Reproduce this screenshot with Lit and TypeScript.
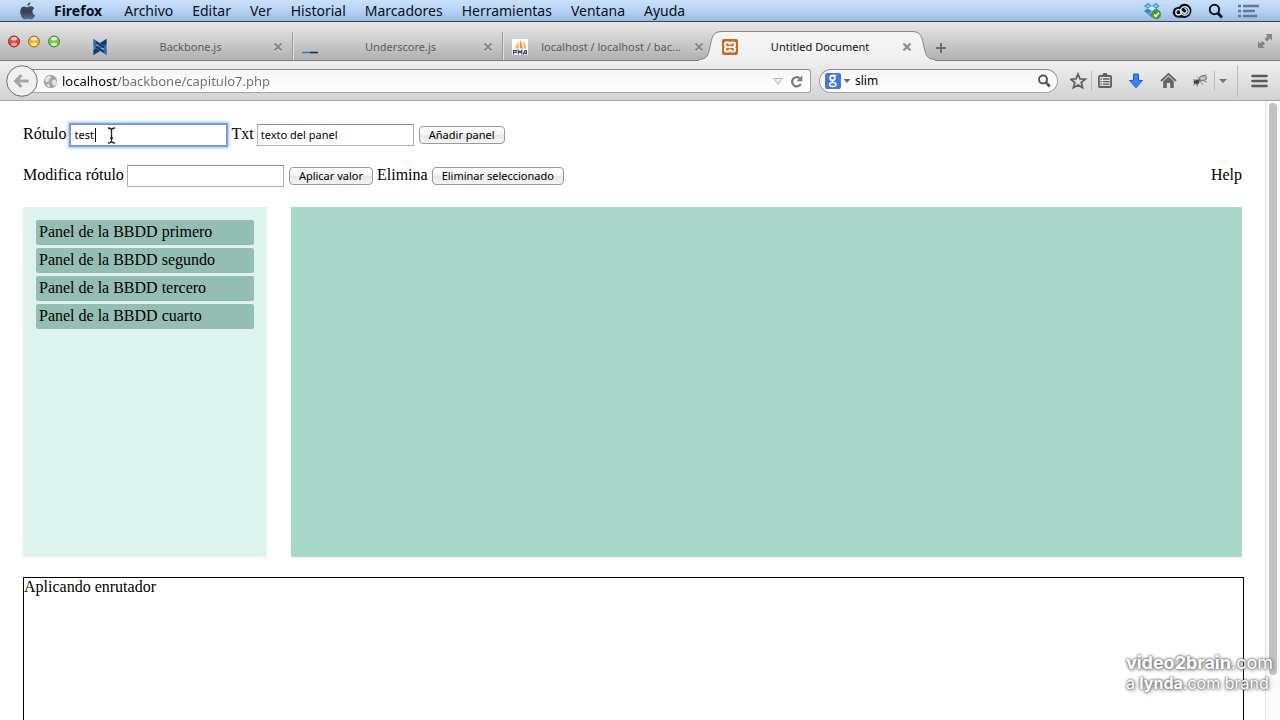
import { LitElement, html, css, svg } from "lit";
import { customElement } from "lit/decorators.js";

const closeIcon = html`<svg width="10" height="10" viewBox="0 0 10 10">
  <path d="M1.500 2.500 8.500 9.500M8.500 2.500 1.500 9.500" stroke="#fff" stroke-width="2" opacity=".5" />
  <path d="M1.500 1.500 8.500 8.500M8.500 1.500 1.500 8.500" stroke="#8a8a8a" stroke-width="2.200" />
</svg>`;

const backboneIcon = html`<svg width="16" height="18" viewBox="0 0 16 18">
  <path d="M1.500 1 4.500 3V14.500L1.500 17Z" fill="#3a78b9" />
  <path d="M14.500 1 11.500 3V14.500L14.500 17Z" fill="#2d65a3" />
  <path d="M14.500 1 7 5.500 9 9 14.500 6ZM1.500 17 9 12.500 7 9 1.500 12Z" fill="#1c3a61" />
  <path d="M1.500 1 8 5 14.500 10V17L8 13 1.500 8Z" fill="#2f6cae" />
  <path d="M4 4 12 9.500M4 8.500 12 14" stroke="#14253d" stroke-width="1.200" />
  <path d="M4.500 6.500 7 8 4.500 7.500ZM9 10 11.500 11.500 11.500 10.300Z" fill="#d8e2ec" />
</svg>`;

const underscoreIcon = html`<svg width="16" height="16" viewBox="0 0 16 16">
  <path d="M0 13.500H9" stroke="#3f7dbd" stroke-width="1.600" />
  <path d="M8 13.500H16" stroke="#17355a" stroke-width="1.600" />
</svg>`;

const pmaIcon = html`<svg width="16" height="16" viewBox="0 0 16 16">
  <rect width="16" height="16" fill="#fff" />
  <path d="M6.500 1.500V9.500H2.200Q5.500 6 6.500 1.500Z" fill="#f2b54a" />
  <path d="M8 1Q11 5 10.600 9.500H7.500Q8.500 5 8 1Z" fill="#e99a1c" />
  <path d="M11 2Q14 5 14 9.500H11.600Q12 6 11 2Z" fill="#f2b54a" />
  <path d="M1.500 15.500V11.500H4.200V13.500H1.500M6.300 15.500V11.500L8 13.500 9.800 11.500V15.500M11.300 15.500 13 11.500H14.300V15.500M12 14.200H14" fill="none" stroke="#3b3a77" stroke-width="1.200" />
</svg>`;

const xamppIcon = html`<svg width="16" height="16" viewBox="0 0 16 16">
  <rect width="16" height="16" rx="2" fill="#c96a22" />
  <path d="M4.500 3.500H6.500L8 5 9.500 3.500H11.500Q13 3.500 13 5V6.500L11.500 8 13 9.500V11Q13 12.500 11.500 12.500H9.500L8 11 6.500 12.500H4.500Q3 12.500 3 11V9.500L4.500 8 3 6.500V5Q3 3.500 4.500 3.500Z" fill="none" stroke="#fff" stroke-width="2" />
  <path d="M5.500 8H10.500" stroke="#fff" stroke-width="1.800" />
</svg>`;

interface TabInfo {
  title: string;
  icon: unknown;
}

const TABS: TabInfo[] = [
  { title: "Backbone.js", icon: backboneIcon },
  { title: "Underscore.js", icon: underscoreIcon },
  { title: "localhost / localhost / bac...", icon: pmaIcon },
];

@customElement("mac-menubar")
class MacMenubar extends LitElement {
  static styles = css`
    :host {
      display: block;
    }
    .bar {
      box-sizing: border-box;
      height: 22px;
      display: flex;
      align-items: center;
      padding: 0 20px 0 19px;
      background: linear-gradient(#c9e0fa, #b4d1f3 55%, #9cbade);
      border-bottom: 1px solid #35455c;
      font: 14px/20px "Noto Sans", sans-serif;
      color: #0a0f18;
    }
    .menus {
      flex: 1;
      display: flex;
      gap: 19px;
      margin-left: 18px;
    }
    .menu {
      border: 0;
      padding: 0;
      background: none;
      font: inherit;
      color: inherit;
    }
    .app {
      font-weight: 700;
      margin-right: 3px;
    }
    .status {
      display: flex;
      align-items: center;
      gap: 10px;
    }
    svg {
      display: block;
    }
  `;

  render() {
    const menus = ["Archivo", "Editar", "Ver", "Historial", "Marcadores", "Herramientas", "Ventana", "Ayuda"];
    return html`<nav class="bar">
      <svg width="17" height="20" viewBox="0 0 17 20">
        <defs>
          <linearGradient id="apple" x1="0" y1="0" x2="0" y2="1">
            <stop offset="0" stop-color="#4a5361" />
            <stop offset=".55" stop-color="#39414e" />
            <stop offset="1" stop-color="#5b7596" />
          </linearGradient>
        </defs>
        <path d="M11.500 1Q11.600 4.500 8.200 5 8.200 2 11.500 1ZM8.500 6.300Q10.200 5.200 12 5.300 14.200 5.500 15.300 7.200 13.200 8.500 13.400 10.800 13.600 13.300 16 14.200 14.500 18.500 12 18.600C10.700 18.600 10.200 17.900 8.700 17.900S6.700 18.700 5.500 18.600Q3.400 18.300 2 14.500C.5 10 1.500 5.600 5 5.400 6.500 5.300 7.300 6.300 8.500 6.300Z" fill="url(#apple)" />
      </svg>
      <div class="menus">
        <button class="menu app">Firefox</button>
        ${menus.map((m) => html`<button class="menu">${m}</button>`)}
      </div>
      <div class="status">
        <svg width="19" height="18" viewBox="0 0 19 18">
          <path d="M5 1 1 4 4.500 6.500 1 9 5 12 9 9 13 12 16.500 9 13.500 6.500 16.500 4 13 1 9 4Z" fill="#2f87c8" />
          <path d="M5 2.200 7.800 4.200 4.700 5.600 2.500 4ZM13 2.200 15.200 4 13.300 5.600 10.200 4.200Z" fill="#8cc3ea" />
          <path d="M9 4 13 6.500 9 9 4.500 6.500Z" fill="#d8ebfa" />
          <path d="M5 12.500 9 10 13 12.500 9 15.500Z" fill="#3a90cc" />
          <circle cx="13.300" cy="12.500" r="4.800" fill="#4f9d2c" />
          <path d="M11 12.500 12.800 14.300 15.800 10.800" fill="none" stroke="#fff" stroke-width="1.500" />
        </svg>
        <svg width="24" height="16" viewBox="0 0 24 16">
          <g fill="#0b0d11">
            <circle cx="6" cy="9.300" r="5.300" />
            <circle cx="12.500" cy="7.800" r="7" />
            <rect x="6" y="8" width="8" height="6.700" />
          </g>
          <g fill="none" stroke="#d8e8fa" stroke-width="1.400">
            <circle cx="6.500" cy="9.300" r="2.700" />
            <circle cx="12.800" cy="8" r="4.300" />
            <path d="M8.500 7.300 12 10.500Q15 10.500 15 8T12.500 5.800" />
          </g>
        </svg>
        <svg width="22" height="18" viewBox="0 0 22 18">
          <circle cx="8.500" cy="7.500" r="4.700" fill="none" stroke="#0c1118" stroke-width="2" />
          <path d="M11.800 11 16 15.500" stroke="#0c1118" stroke-width="2.600" />
        </svg>
        <svg width="22" height="14" viewBox="0 0 22 14">
          <path d="M0 2H3M5 2H21M0 7H3M5 7H17M0 12H3M5 12H19" stroke="#5f779b" stroke-width="2.600" />
        </svg>
      </div>
    </nav>`;
  }
}

@customElement("browser-tabs")
class BrowserTabs extends LitElement {
  static styles = css`
    :host {
      display: block;
    }
    .strip {
      box-sizing: border-box;
      height: 39px;
      display: flex;
      align-items: flex-end;
      background: linear-gradient(#e6e6e6, #d0d0d0 45%, #b0b0b0);
      border-bottom: 1px solid #7b7b7b;
      font: 11px/16px "Noto Sans", sans-serif;
      color: #5c5c5c;
    }
    .lights {
      align-self: flex-start;
      flex: none;
      width: 76px;
      padding: 13px 0 0 8px;
    }
    .tab {
      box-sizing: border-box;
      width: 210px;
      height: 28px;
      padding: 2px 10px 0 8px;
      display: flex;
      align-items: center;
      border-right: 1px solid #e2e2e2;
      box-shadow: inset -1px 0 #9b9b9b;
    }
    .tab.last {
      border-right: 0;
      box-shadow: none;
    }
    .title {
      flex: 1;
      text-align: center;
      white-space: nowrap;
    }
    .close,
    .new {
      flex: none;
      padding: 0;
      border: 0;
      background: none;
    }
    .close {
      width: 10px;
      height: 10px;
    }
    .active {
      display: flex;
      height: 30px;
      margin: 0 0 -1px -15px;
      z-index: 1;
      color: #111;
    }
    .body {
      box-sizing: border-box;
      width: 190px;
      height: 30px;
      display: flex;
      align-items: center;
      background: linear-gradient(#f6f6f6, #efefef);
      border-top: 1px solid #8b8b8b;
    }
    .new {
      width: 12px;
      height: 12px;
      margin: 0 0 6px;
    }
    .full {
      margin: 0 8px 12px auto;
    }
    svg {
      display: block;
    }
  `;

  private light(x: number, edge: string, fill: string, glow: string) {
    return svg`<circle cx=${x} cy="6.500" r="5.500" fill=${fill} stroke=${edge} />
      <ellipse cx=${x} cy="3.800" rx="3" ry="1.800" fill="#fff" opacity=".75" />
      <ellipse cx=${x} cy="9.300" rx="3" ry="1.800" fill=${glow} opacity=".8" />`;
  }

  private edge(flip: boolean) {
    return html`<svg width="23" height="30" viewBox="0 0 23 30">
      <defs>
        <linearGradient id="tabfill" x1="0" y1="0" x2="0" y2="1">
          <stop offset="0" stop-color="#f6f6f6" />
          <stop offset="1" stop-color="#efefef" />
        </linearGradient>
      </defs>
      <g transform=${flip ? "translate(23 0) scale(-1 1)" : ""}>
        <path d="M0 30V28.500C8 28 9 25 11 16 13 6 14 .5 23 .5V30Z" fill="url(#tabfill)" />
        <path d="M0 28.500C8 28 9 25 11 16 13 6 14 .5 23 .5" fill="none" stroke="#868686" />
      </g>
    </svg>`;
  }

  render() {
    return html`<div class="strip">
      <svg class="lights" height="13" viewBox="0 0 76 13">
        ${this.light(6, "#8e3530", "#de4a44", "#ffb0a8")} ${this.light(26, "#98702a", "#e6b03f", "#fff0a0")}
        ${this.light(46, "#4c8038", "#7cc35b", "#dcffb8")}
      </svg>
      ${TABS.map(
        (t, i) => html`<div class="tab ${i === TABS.length - 1 ? "last" : ""}">
          ${t.icon}<span class="title">${t.title}</span>
          <button class="close" aria-label="Cerrar">${closeIcon}</button>
        </div>`
      )}
      <div class="active">
        ${this.edge(false)}
        <div class="body">
          ${xamppIcon}<span class="title">Untitled Document</span>
          <button class="close" aria-label="Cerrar">${closeIcon}</button>
        </div>
        ${this.edge(true)}
      </div>
      <button class="new" aria-label="Nueva">
        <svg width="12" height="12" viewBox="0 0 12 12">
          <path d="M6 1V11M1 6H11" stroke="#6e6e6e" stroke-width="2" />
        </svg>
      </button>
      <svg class="full" width="14" height="14" viewBox="0 0 14 14">
        <path d="M7.500 0H14V6.500L12 4.500 9 7.500 6.500 5 9.500 2ZM0 7.500 2 9.500 4.500 7 7 9.500 4.500 12 6.500 14H0Z" fill="#858585" />
      </svg>
    </div>`;
  }
}

@customElement("browser-toolbar")
class BrowserToolbar extends LitElement {
  static styles = css`
    :host {
      display: block;
    }
    .bar {
      box-sizing: border-box;
      height: 40px;
      display: flex;
      align-items: center;
      padding: 1px 12px 0 6px;
      background: linear-gradient(#efefef, #d2d2d2);
      border-bottom: 1px solid #a8a8a8;
    }
    .icon {
      flex: none;
      padding: 0;
      border: 0;
      background: none;
    }
    .back {
      z-index: 1;
    }
    .field {
      box-sizing: border-box;
      height: 24px;
      display: flex;
      align-items: center;
      background: linear-gradient(#f6f6f6, #fff);
      border: 1px solid #a3a3a3;
      border-top-color: #8a8a8a;
    }
    .address {
      flex: 1;
      margin-left: -8px;
      padding: 0 7px 0 12px;
      border-radius: 0 3px 3px 0;
    }
    .search {
      width: 239px;
      margin: 0 12px 0 8px;
      padding: 0 5px;
      border-radius: 12px;
    }
    input {
      flex: 1;
      min-width: 0;
      border: 0;
      outline: 0;
      padding: 0;
      margin: 0 4px;
      background: none;
      font: 12px/18px "Noto Sans", sans-serif;
      color: #000;
    }
    .url {
      font-size: 13px;
      background: linear-gradient(90deg, #0b0b0b 55px, #6d6d6d 55px);
      -webkit-background-clip: text;
      background-clip: text;
      color: transparent;
    }
    .reload {
      margin-left: 7px;
    }
    .tools {
      display: flex;
      align-items: center;
    }
    .rule {
      width: 1px;
      height: 20px;
      background: #bdbdbd;
    }
    .tall {
      height: 32px;
      margin: 0 13px 0 8px;
    }
    svg {
      display: block;
    }
  `;

  render() {
    return html`<div class="bar">
      <button class="icon back" aria-label="Atrás">
        <svg width="32" height="32" viewBox="0 0 32 32">
          <circle cx="16" cy="16" r="15.300" fill="#f0f0f0" stroke="#6f6f6f" />
          <path d="M15.500 10 9.800 16 15.500 22M10 16H22.500" fill="none" stroke="#a3a3a3" stroke-width="3.200" />
        </svg>
      </button>
      <div class="field address">
        <svg width="15" height="15" viewBox="0 0 15 15">
          <circle cx="7.500" cy="7.500" r="6.800" fill="#a6a6a6" />
          <path d="M1.500 5Q4 2 7 1.500L8 4 5.500 5.500 6 7.500 3 8ZM8.500 7 12 5.500 14 8Q13 11 11 12L9.500 10ZM3.500 10.500 6 10 7 13.500Q5 13 3.500 10.500Z" fill="#e9e9e9" />
        </svg>
        <input class="url" aria-label="Dirección" .value=${"localhost/backbone/capitulo7.php"} />
        <svg width="10" height="7" viewBox="0 0 10 7">
          <path d="M.8.500H9.200L5 6.300Z" fill="#eee" stroke="#b3b3b3" />
        </svg>
        <button class="icon reload" aria-label="Recargar">
          <svg width="13" height="13" viewBox="0 0 13 13">
            <path d="M9.600 3.200A4.600 4.600 0 1 0 10.800 9" fill="none" stroke="#7b7b7b" stroke-width="2.200" />
            <path d="M12.300.5V6.300H6.500Z" fill="#7b7b7b" />
          </svg>
        </button>
      </div>
      <div class="field search">
        <svg width="26" height="16" viewBox="0 0 26 16">
          <rect width="16" height="16" rx="2" fill="#4a76dc" />
          <g fill="none" stroke="#fff">
            <circle cx="7.500" cy="5" r="2.400" stroke-width="1.600" />
            <path d="M8 2.300H11.300M9 7.200C6.500 8 6.500 8.800 8.500 9.300" stroke-width="1.300" />
            <ellipse cx="7.800" cy="11.600" rx="3.200" ry="2" stroke-width="1.500" />
          </g>
          <path d="M18.500 6H25.500L22 10Z" fill="#6a6a6a" />
        </svg>
        <input aria-label="Buscar" .value=${"slim"} />
        <svg width="15" height="14" viewBox="0 0 15 14">
          <circle cx="6" cy="5.500" r="4" fill="none" stroke="#555" stroke-width="2" />
          <path d="M9 8.500 12.800 12.500" stroke="#555" stroke-width="2.600" />
        </svg>
      </div>
      <div class="tools">
        <button class="icon" aria-label="Marcador">
          <svg width="21" height="18" viewBox="0 0 21 18">
            <path d="M8 2 10 6.900 15.300 7.200 11.200 10.600 12.600 15.700 8 12.900 3.400 15.700 4.800 10.600.700 7.200 6 6.900Z" fill="none" stroke="#606060" stroke-width="1.700" />
          </svg>
        </button>
        <span class="rule"></span>
        <button class="icon" aria-label="Lista">
          <svg width="28" height="18" viewBox="0 0 28 18">
            <rect x="6.900" y="4" width="12.200" height="11" rx="1" fill="none" stroke="#606060" stroke-width="1.800" />
            <path d="M10 3.500 11.500 1H14.500L16 3.500Z" fill="#606060" />
            <path d="M8.500 7H10M11 7H17.500M8.500 9.600H10M11 9.600H17.500M8.500 12.200H10M11 12.200H17.500" stroke="#606060" stroke-width="1.300" />
          </svg>
        </button>
        <button class="icon" aria-label="Descargas">
          <svg width="33" height="18" viewBox="0 0 33 18">
            <path d="M13.500 2H18.500V8.500H22.500L16 15.800 9.500 8.500H13.500Z" fill="#3b82ee" stroke="#2461c9" />
          </svg>
        </button>
        <button class="icon" aria-label="Inicio">
          <svg width="32" height="18" viewBox="0 0 32 18">
            <path d="M8 9 15.500 2 23 9" fill="none" stroke="#656565" stroke-width="1.900" />
            <path d="M10.200 9.200 15.500 4.500 20.800 9.200V16H17.200V11H13.800V16H10.200Z" fill="#656565" />
          </svg>
        </button>
        <button class="icon" aria-label="Firebug">
          <svg width="29" height="18" viewBox="0 0 29 18">
            <ellipse cx="11.500" cy="10" rx="2.900" ry="2.400" fill="#3f3f3f" />
            <ellipse cx="14.500" cy="8" rx="1.600" ry="1.500" fill="#666" />
            <ellipse cx="18" cy="6" rx="3.500" ry="2.400" fill="#c6c6c6" stroke="#777" transform="rotate(-15 18 6)" />
            <path d="M8 7 11 9M8 13 11 11M12 15 13 11M18 13 15 9M22 10 17 8.500M21.500 2.500 18 5M12 4.500 14.500 7" stroke="#888" />
          </svg>
        </button>
        <span class="rule"></span>
        <svg width="14" height="6" viewBox="0 0 14 6">
          <path d="M4 1H12L8 5Z" fill="#727272" />
        </svg>
        <span class="rule tall"></span>
        <button class="icon" aria-label="Menú">
          <svg width="17" height="14" viewBox="0 0 17 14">
            <path d="M1.500 2H15.500M1.500 7H15.500M1.500 12H15.500" stroke="#595959" stroke-width="2.600" stroke-linecap="round" />
          </svg>
        </button>
      </div>
    </div>`;
  }
}

@customElement("panel-page")
class PanelPage extends LitElement {
  static styles = css`
    :host {
      display: flex;
      flex: 1;
      min-height: 0;
      background: #fff;
      font: 16px/18px "Liberation Serif", serif;
      color: #000;
    }
    .page {
      flex: 1;
      min-width: 0;
      padding: 23px 23px 0;
    }
    .row {
      display: flex;
      align-items: center;
      height: 22px;
      margin-bottom: 19px;
      white-space: nowrap;
    }
    label,
    .word,
    .help {
      padding-bottom: 2px;
    }
    label {
      margin-right: 3px;
    }
    .word {
      margin-right: 4px;
    }
    input {
      box-sizing: border-box;
      width: 157px;
      height: 22px;
      padding: 0 3px 2px;
      border: 1px solid #b0b0b0;
      border-top-color: #8c8c8c;
      outline: 0;
      background: #fff;
      font: 11px/16px "Noto Sans", sans-serif;
      color: #000;
    }
    .box {
      position: relative;
      display: flex;
      margin-right: 5px;
    }
    .focused input {
      border-color: #7198cc;
      box-shadow: 0 0 0 1px #7fa5d8, 0 0 3px 2px #9dbfe8;
      padding-left: 4px;
    }
    .caret {
      position: absolute;
      left: 25px;
      top: 4px;
      width: 1px;
      height: 14px;
      background: #000;
    }
    .pointer {
      position: absolute;
      left: 37px;
      top: 3px;
    }
    .push {
      height: 18px;
      margin-right: 4px;
      padding: 0 9px;
      border: 1px solid #9a9a9a;
      border-radius: 4px;
      background: linear-gradient(#fff, #f3f3f3 50%, #e6e6e6 51%, #f4f4f4);
      font: 11px/16px "Noto Sans", sans-serif;
      color: #000;
    }
    .help {
      margin-left: auto;
      color: #000;
      text-decoration: none;
    }
    .columns {
      display: flex;
      justify-content: space-between;
      height: 350px;
      margin: 20px 0;
    }
    .second {
      margin-bottom: 0;
    }
    .list {
      box-sizing: border-box;
      width: 20%;
      margin: 0;
      padding: 13px;
      list-style: none;
      background: #dcf3ee;
    }
    .item {
      height: 25px;
      margin-bottom: 3px;
      padding-left: 3px;
      border-radius: 2px;
      background: #94beb3;
      line-height: 24px;
    }
    .canvas {
      width: 78%;
      background: #a9d7ca;
    }
    .log {
      width: 100%;
      height: 200px;
      border: 1px solid #000;
    }
    .scroll {
      box-sizing: border-box;
      flex: none;
      width: 15px;
      padding: 2px 3px 45px;
      border-left: 1px solid #e6e6e6;
      background: #fafafa;
      display: flex;
    }
    .thumb {
      flex: 1;
      border-radius: 4px;
      background: #c1c1c1;
    }
  `;

  render() {
    const items = ["primero", "segundo", "tercero", "cuarto"];
    return html`<main class="page">
        <div class="row">
          <label for="title">Rótulo</label>
          <span class="box focused">
            <input id="title" .value=${"test"} />
            <span class="caret"></span>
            <svg class="pointer" width="9" height="17" viewBox="0 0 9 17">
              <path d="M1 1Q4.500 1 4.500 3.500 4.500 1 8 1M4.500 3V14M1 16Q4.500 16 4.500 13.500 4.500 16 8 16M3 11H6" fill="none" stroke="#222" stroke-width="1.300" />
            </svg>
          </span>
          <label for="text">Txt</label>
          <span class="box"><input id="text" .value=${"texto del panel"} /></span>
          <button class="push">Añadir panel</button>
        </div>
        <div class="row second">
          <label for="rename">Modifica rótulo</label>
          <span class="box"><input id="rename" /></span>
          <button class="push">Aplicar valor</button>
          <span class="word">Elimina</span>
          <button class="push">Eliminar seleccionado</button>
          <a class="help" href="#help">Help</a>
        </div>
        <div class="columns">
          <ul class="list">
            ${items.map((i) => html`<li class="item">Panel de la BBDD ${i}</li>`)}
          </ul>
          <section class="canvas"></section>
        </div>
        <div class="log">Aplicando enrutador</div>
      </main>
      <div class="scroll"><div class="thumb"></div></div>`;
  }
}

@customElement("app-root")
class AppRoot extends LitElement {
  static styles = css`
    :host {
      position: relative;
      display: flex;
      flex-direction: column;
      height: 100vh;
      overflow: hidden;
    }
    .brand {
      position: absolute;
      right: 7px;
      bottom: 27px;
      font: 400 18px/20px Inter, Lato, sans-serif;
      color: #fff;
      text-shadow: 0 0 2px #666, 0 0 3px #777, 1px 1px 4px #888;
    }
    .brand b {
      font-weight: 700;
    }
    .line {
      display: block;
      white-space: nowrap;
    }
    .small {
      font-size: 16px;
    }
  `;

  render() {
    return html`<mac-menubar></mac-menubar>
      <browser-tabs></browser-tabs>
      <browser-toolbar></browser-toolbar>
      <panel-page></panel-page>
      <div class="brand">
        <span class="line"><b>video2brain</b>.com</span>
        <span class="line small">a <b>lynda</b>.com brand</span>
      </div>`;
  }
}
